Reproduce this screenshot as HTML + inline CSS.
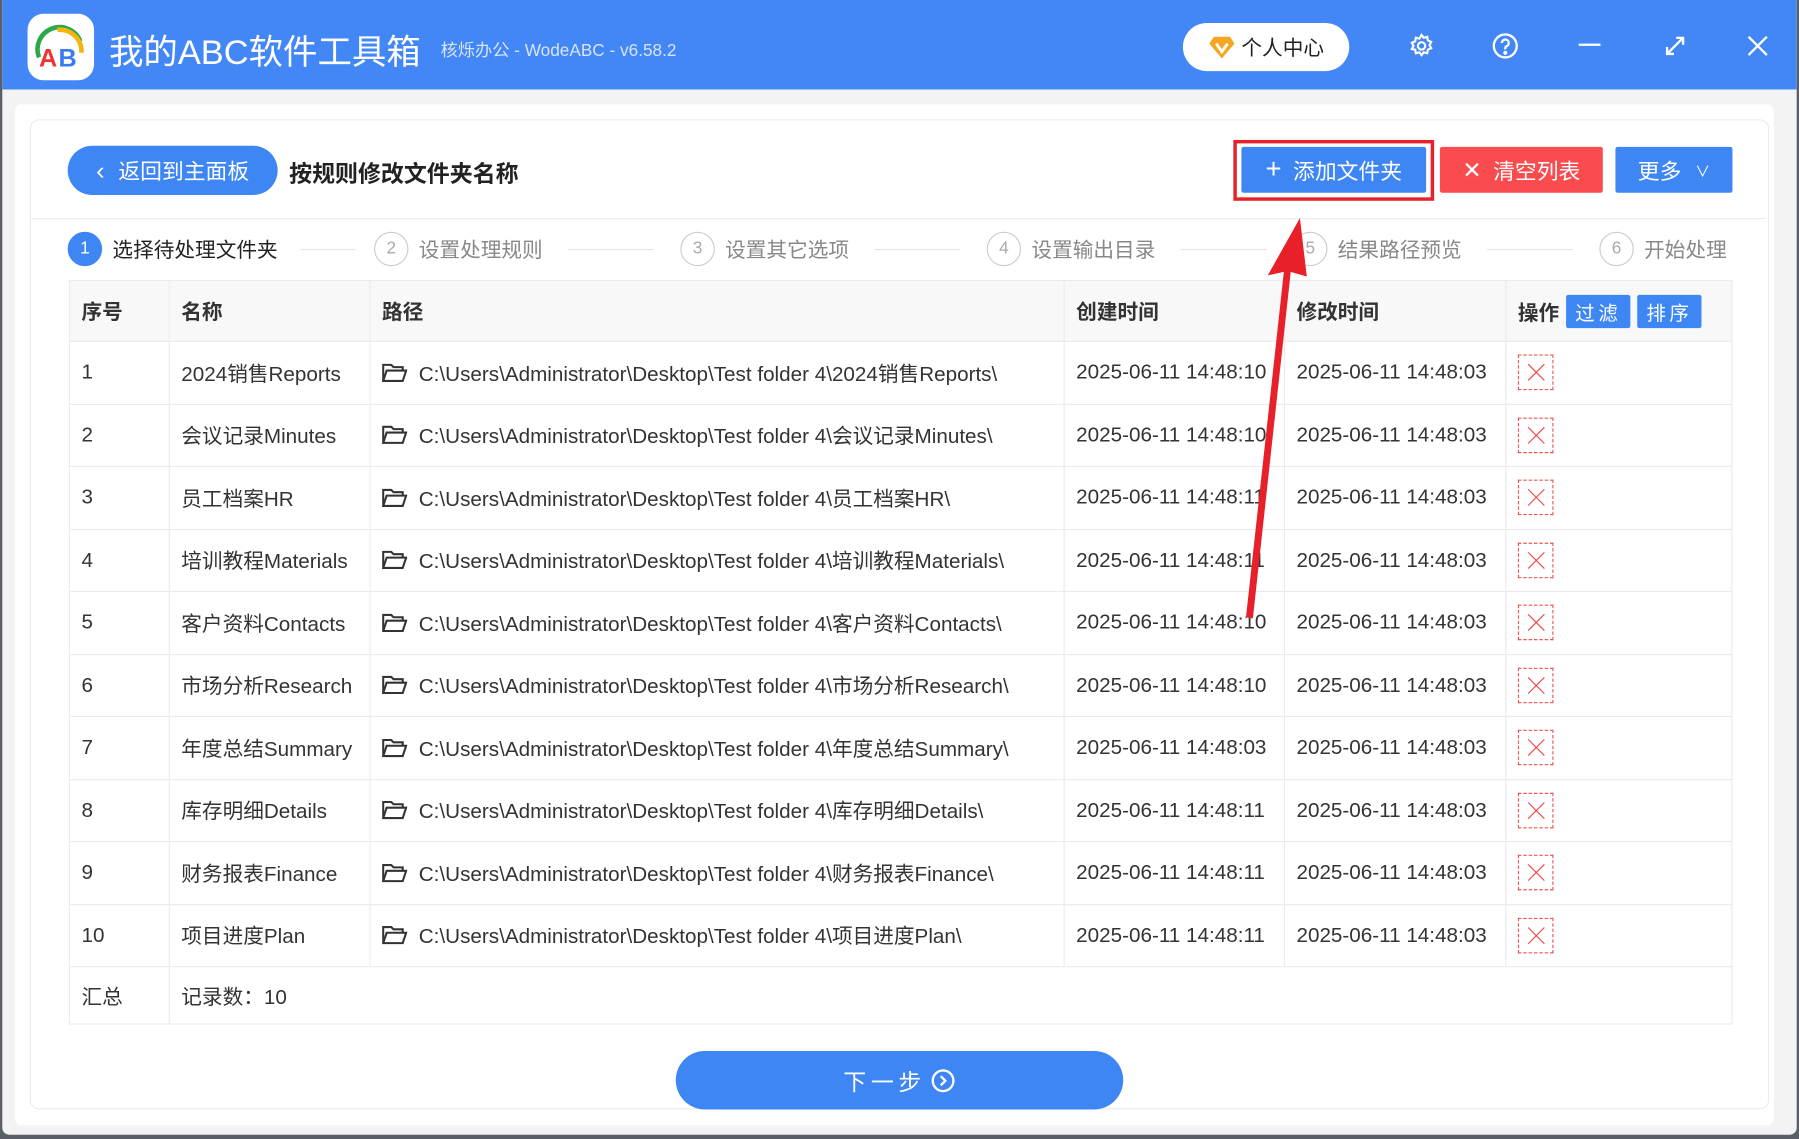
<!DOCTYPE html>
<html><head><meta charset="utf-8"><style>
*{margin:0;padding:0;box-sizing:border-box}
html,body{width:1799px;height:1139px;overflow:hidden;background:#5a5e66}
#s{position:absolute;left:0;top:0;width:1568px;height:993px;transform:scale(1.14732);transform-origin:0 0;font-family:"Liberation Sans","Noto Sans CJK SC",sans-serif;color:#333}
.a{position:absolute}
.win{left:2px;top:0;width:1564px;height:989px;background:#f3f3f3;border-radius:0 0 6px 6px;overflow:hidden}
.hdr{left:0;top:0;width:1564px;height:78px;background:#4287f5}
.btn{position:absolute;color:#fff;font-size:19px;display:flex;align-items:center;justify-content:center}
.step{position:absolute;top:202px;height:30px;display:flex;align-items:center;font-size:18px;color:#888}
.step i{display:inline-block;width:30px;height:30px;border:1.5px solid #ccc;border-radius:50%;font-style:normal;font-size:15px;text-align:center;line-height:27px;margin-right:9px;color:#aaa}
.line{position:absolute;top:217px;height:1px;background:#e4e4e4}
table{position:absolute;left:60px;top:244px;width:1450px;border-collapse:collapse;font-size:18px}
td,th{border:1px solid #ebebeb;height:54.5px;padding:0 10px;text-align:left;white-space:nowrap;overflow:hidden}
th{background:#f8f8f8;font-weight:bold;font-size:18px;height:53px}
.x{display:inline-block;width:31px;height:31px;border:1px dashed #f05656;position:relative;vertical-align:middle}
.x:before,.x:after{content:"";position:absolute;left:5px;top:14px;width:20px;height:1px;background:#f04848;transform:rotate(45deg)}
.x:after{transform:rotate(-45deg)}
.sb{display:inline-block;background:#3d86f4;color:#fff;font-weight:normal;font-size:17px;padding:2px 8px;border-radius:2px;margin-left:6px;letter-spacing:3px}
.fd{display:inline-block;vertical-align:-2px;margin-right:10px}
</style></head><body><div id="s">
<div class="a win">
 <div class="a hdr"></div>
 <div class="a" style="left:22px;top:12px;width:58px;height:58px;background:#fff;border-radius:14px">
  <svg width="58" height="58" viewBox="0 0 58 58"><path d="M10 38 A19 19 0 0 1 46 24" stroke="#2ca84a" stroke-width="4" fill="none"/><path d="M26 14 A19 19 0 0 1 47 34" stroke="#f6b40e" stroke-width="4" fill="none"/><text x="10" y="46" font-family="Liberation Sans" font-weight="bold" font-size="22" fill="#e33">A</text><text x="27" y="46" font-family="Liberation Sans" font-weight="bold" font-size="22" fill="#3a7cf0">B</text></svg>
 </div>
 <div class="a" style="left:93px;top:21px;color:#fff;font-size:30px">我的ABC软件工具箱</div>
 <div class="a" style="left:382px;top:33px;color:#d6e4fc;font-size:15px">核烁办公 - WodeABC - v6.58.2</div>
 <div class="a" style="left:1029px;top:20px;width:145px;height:42px;background:#fff;border-radius:21px;display:flex;align-items:center;justify-content:center;font-size:18px;color:#222">
  <svg width="24" height="22" viewBox="0 0 24 22" style="margin-right:5px"><path d="M5 2h14l4 6-11 13L1 8z" fill="#f5a623"/><path d="M7 8l5 7 5-7" stroke="#fff" stroke-width="2.5" fill="none"/></svg>个人中心</div>
 <svg class="a" style="left:1226px;top:29px" width="22" height="22" viewBox="0 0 24 24" fill="none" stroke="#fff" stroke-width="2"><circle cx="12" cy="12" r="3.5"/><path d="M12 1.5l2 2.8 3.4-.9.6 3.4 3.2 1.4-1.6 3 1.6 3-3.2 1.4-.6 3.4-3.4-.9-2 2.8-2-2.8-3.4.9-.6-3.4L2.8 15l1.6-3-1.6-3L6 7.6l.6-3.4 3.4.9z"/></svg>
 <svg class="a" style="left:1298px;top:28px" width="24" height="24" viewBox="0 0 24 24" fill="none" stroke="#fff" stroke-width="2"><circle cx="12" cy="12" r="10"/><path d="M9 9.5a3 3 0 1 1 4 2.8c-.8.4-1 1-1 2v.7"/><circle cx="12" cy="18" r=".8" fill="#fff"/></svg>
 <div class="a" style="left:1374px;top:38px;width:19px;height:2px;background:#fff"></div>
 <svg class="a" style="left:1448px;top:30px" width="20" height="20" viewBox="0 0 20 20" stroke="#fff" stroke-width="2" fill="none"><path d="M3 17L17 3M11 3h6v6M3 11v6h6"/></svg>
 <svg class="a" style="left:1520px;top:30px" width="20" height="20" viewBox="0 0 20 20" stroke="#fff" stroke-width="2"><path d="M2 2l16 16M18 2L2 18"/></svg>
 <div class="a" style="left:11px;top:91px;width:1533px;height:890px;background:#fff;border-radius:6px"></div>
 <div class="a" style="left:24px;top:104px;width:1516px;height:863px;background:#fff;border:1px solid #ececec;border-radius:8px"></div>
</div>
<div class="btn" style="left:59px;top:127px;width:183px;height:43px;background:#3d86f4;border-radius:22px;font-size:19px"><span style="font-size:22px;margin-right:12px">&#x2039;</span>返回到主面板</div>
<div class="a" style="left:252px;top:135px;font-size:20px;font-weight:bold;color:#222">按规则修改文件夹名称</div>
<div class="a" style="left:1075px;top:122px;width:175px;height:53px;border:3px solid #e8202a"></div>
<div class="btn" style="left:1082px;top:128px;width:161px;height:40px;background:#3d86f4;border-radius:2px"><span style="font-size:24px;margin-right:10px;font-weight:200">+</span>添加文件夹</div>
<div class="btn" style="left:1255px;top:128px;width:142px;height:40px;background:#fa4c4f;border-radius:2px"><span style="font-size:20px;margin-right:10px">✕</span>清空列表</div>
<div class="btn" style="left:1408px;top:128px;width:102px;height:40px;background:#3d86f4;border-radius:2px">更多<span style="font-size:13px;margin-left:12px">∨</span></div>
<div class="a" style="left:27px;top:190px;width:1512px;height:1px;background:#ececec"></div>
<div class="step" style="left:59px;color:#222"><i style="background:#3d86f4;border-color:#3d86f4;color:#fff">1</i>选择待处理文件夹</div>
<div class="line" style="left:262px;width:48px"></div>
<div class="step" style="left:326px"><i>2</i>设置处理规则</div>
<div class="line" style="left:495px;width:75px"></div>
<div class="step" style="left:593px"><i>3</i>设置其它选项</div>
<div class="line" style="left:762px;width:75px"></div>
<div class="step" style="left:860px"><i>4</i>设置输出目录</div>
<div class="line" style="left:1029px;width:75px"></div>
<div class="step" style="left:1127px"><i>5</i>结果路径预览</div>
<div class="line" style="left:1296px;width:75px"></div>
<div class="step" style="left:1394px"><i>6</i>开始处理</div>
<table>
<colgroup><col style="width:87px"><col style="width:175px"><col style="width:605px"><col style="width:192px"><col style="width:193px"><col></colgroup>
<tr><th>序号</th><th>名称</th><th>路径</th><th>创建时间</th><th>修改时间</th><th>操作<span class="sb">过滤</span><span class="sb">排序</span></th></tr>
<tbody id="tb"></tbody>
<tr><td style="height:50px">汇总</td><td colspan="5" style="height:50px">记录数：10</td></tr>
</table>
<div class="btn" style="left:589px;top:916px;width:390px;height:51px;background:#3d86f4;border-radius:26px;font-size:20px;letter-spacing:4px">下一步 <svg width="22" height="22" viewBox="0 0 22 22" style="margin-left:4px" fill="none" stroke="#fff" stroke-width="2"><circle cx="11" cy="11" r="9"/><path d="M9 7l4 4-4 4"/></svg></div>
<svg class="a" style="left:1080px;top:185px" width="80" height="360" viewBox="0 0 80 360"><path d="M53 5L25 55 l14-3 L6 353 l6 1 L45 52 l14 4z" fill="#e8202a"/></svg>
</div>
<script>
var n=["2024销售Reports","会议记录Minutes","员工档案HR","培训教程Materials","客户资料Contacts","市场分析Research","年度总结Summary","库存明细Details","财务报表Finance","项目进度Plan"];
var c=["10","10","11","11","10","10","03","11","11","11"];
var f='<svg class="fd" width="22" height="18" viewBox="0 0 22 18" fill="none" stroke="#333" stroke-width="1.8"><path d="M1 16V2h7l2 2h8v3"/><path d="M1 16l3-9h17l-3 9z"/></svg>';
var h="";for(var i=0;i<10;i++){h+='<tr><td style="vertical-align:middle">'+(i+1)+'</td><td>'+n[i]+'</td><td>'+f+'C:\\Users\\Administrator\\Desktop\\Test folder 4\\'+n[i]+'\\</td><td>2025-06-11 14:48:'+c[i]+'</td><td>2025-06-11 14:48:03</td><td><span class="x"></span></td></tr>';}
document.getElementById("tb").innerHTML=h;
</script>
</body></html>
